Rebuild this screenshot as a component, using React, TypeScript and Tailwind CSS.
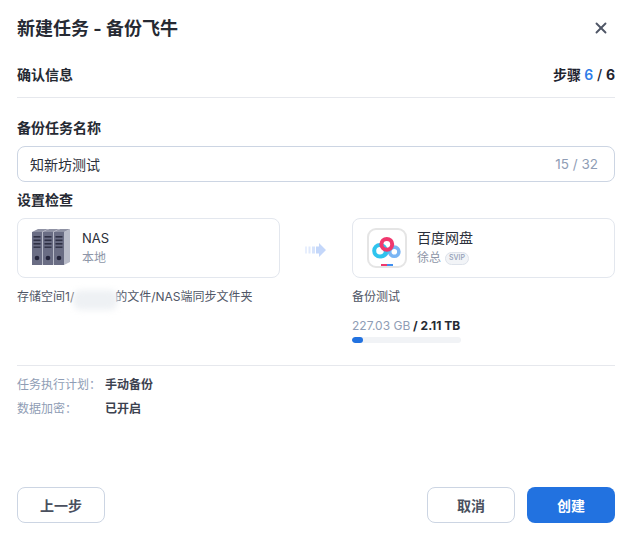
import { X } from 'lucide-react';

const fontStack = "font-['Inter','Noto_Sans_CJK_SC',sans-serif]";

function NasIcon() {
  return (
    <svg width="46" height="38" viewBox="0 0 46 38">
      {[0, 11, 22].map((x) => (
        <g key={x} transform={`translate(${x} 0)`}>
          <path d="M10 3 L16 0 L16 33 L10 36 Z" fill="#b9bcc9" />
          <path d="M0 3 L6 0 L16 0 L10 3 Z" fill="#8f92a4" />
          <rect x="0" y="3" width="10" height="33" fill="#6a6d84" />
          <rect x="1.5" y="7" width="7" height="1.6" fill="#2f3145" />
          <rect x="1.5" y="10.5" width="7" height="1.6" fill="#2f3145" />
          <rect x="1.5" y="14" width="7" height="1.6" fill="#2f3145" />
          <rect x="1.5" y="17.5" width="7" height="1.4" fill="#2f3145" />
          <circle cx="5" cy="29" r="2.3" fill="#23243a" />
        </g>
      ))}
    </svg>
  );
}

function BaiduIcon() {
  return (
    <div className="flex h-10 w-10 shrink-0 items-center justify-center rounded-[9px] border-2 border-[#e5e5e5] bg-white">
      <svg width="36" height="36" viewBox="0 0 36 36">
        <circle cx="25.3" cy="21.7" r="4.6" fill="none" stroke="#7ab5f4" strokeWidth="3.6" />
        <path d="M12 26.5 C18 27.5 19 18 24 17" fill="none" stroke="#4fbdf1" strokeWidth="3.6" />
        <circle cx="11" cy="20.7" r="5.8" fill="none" stroke="#2fc4ee" strokeWidth="4" />
        <circle cx="17.8" cy="14.3" r="5.4" fill="none" stroke="#f0386e" strokeWidth="4" />
        <rect x="12" y="34" width="6" height="2" fill="#f0386e" />
        <rect x="18" y="34" width="6" height="2" fill="#3f8ef0" />
      </svg>
    </div>
  );
}

function FlowArrow() {
  return (
    <svg width="22" height="14" viewBox="0 0 22 14">
      <rect x="0" y="3.5" width="2" height="7" fill="#e8effd" />
      <rect x="3.5" y="3.5" width="2" height="7" fill="#e0e9fc" />
      <rect x="7" y="3.5" width="3" height="7" fill="#d6e3fb" />
      <path d="M11 3.5 H14 V0 L21 7 L14 14 V10.5 H11 Z" fill="#c4d7fa" />
    </svg>
  );
}

export default function App() {
  return (
    <div className={`${fontStack} flex h-[536px] w-[632px] flex-col bg-white px-[17px] text-[#1f2430]`}>
      {/* Title */}
      <div className="flex h-[56px] items-center justify-between">
        <h1 className="text-[18px] font-bold text-[#262a33]">新建任务 - 备份飞牛</h1>
        <X className="mr-[5px] h-[18px] w-[18px] text-[#4f5666]" strokeWidth={2.5} />
      </div>

      {/* Step */}
      <div className="mt-[4px] flex h-[28px] items-center justify-between text-[14px] font-bold">
        <span className="text-[#262a33]">确认信息</span>
        <span className="text-[#1f2430]">
          步骤 <span className="font-semibold text-[#2f7de8]">6</span>
          <span className="font-medium"> / </span>6
        </span>
      </div>
      <div className="mt-[9px] h-px bg-[#e6e8ed]" />

      {/* Name */}
      <div className="mt-[21px] text-[14px] font-bold leading-[18px] text-[#262a33]">备份任务名称</div>
      <div className="mt-[9px] flex h-[36px] items-center justify-between rounded-[8px] border border-[#ccd5e3] pl-[12px] pr-[16px]">
        <span className="text-[14px] text-[#2b2f3a]">知新坊测试</span>
        <span className="text-[13.5px] text-[#8f9db5]">15 / 32</span>
      </div>

      {/* Check */}
      <div className="mt-[9px] text-[14px] font-bold leading-[18px] text-[#262a33]">设置检查</div>
      <div className="mt-[9px] flex items-start">
        <div className="w-[263px]">
          <div className="flex h-[60px] items-center rounded-[8px] border border-[#e3e7ee] pl-[14px]">
            <NasIcon />
            <div className="ml-[4px]">
              <div className="text-[13px] leading-[20px] text-[#2b2f3a]">NAS</div>
              <div className="text-[12px] leading-[20px] text-[#8e96a8]">本地</div>
            </div>
          </div>
          <div className="relative mt-[10px] text-[12px] leading-[18px] text-[#4f5666]">
            存储空间1/<span className="inline-block w-[41px]" />的文件/NAS端同步文件夹
            <div className="absolute left-[56px] top-[2px] h-[20px] w-[45px] rounded-[8px] bg-[#eef1f4] blur-[3px]" />
          </div>
        </div>

        <div className="flex h-[60px] w-[72px] items-center justify-center pt-[4px]">
          <FlowArrow />
        </div>

        <div className="w-[263px]">
          <div className="flex h-[60px] items-center rounded-[8px] border border-[#e3e7ee] pl-[14px]">
            <BaiduIcon />
            <div className="ml-[10px]">
              <div className="text-[14px] leading-[20px] text-[#2b2f3a]">百度网盘</div>
              <div className="flex items-center text-[12px] leading-[20px] text-[#8e96a8]">
                徐总
                <span className="ml-[4px] flex h-[13px] items-center rounded-full border border-[#dde2ea] bg-[#f2f4f7] px-[3px] text-[7px] font-medium text-[#8f9db5]">
                  SVIP
                </span>
              </div>
            </div>
          </div>
          <div className="mt-[10px] text-[12px] leading-[18px] text-[#4f5666]">备份测试</div>
          <div className="mt-[11px] text-[12px] leading-[18px]">
            <span className="text-[#8f9db5]">227.03 GB</span>
            <span className="font-bold text-[#262a33]"> / 2.11 TB</span>
          </div>
          <div className="mt-[2px] h-[6px] w-[109px] overflow-hidden rounded-full bg-[#f1f3f6]">
            <div className="h-full w-[11px] rounded-full bg-[#2272e0]" />
          </div>
        </div>
      </div>

      <div className="mt-[22px] h-px bg-[#e6e8ed]" />

      {/* Summary */}
      <div className="mt-[10px] flex flex-col gap-[6px] text-[12px] leading-[18px]">
        <div className="flex">
          <span className="w-[88px] text-[#8f9db5]">任务执行计划：</span>
          <span className="font-bold text-[#3c4250]">手动备份</span>
        </div>
        <div className="flex">
          <span className="w-[88px] text-[#8f9db5]">数据加密：</span>
          <span className="font-bold text-[#3c4250]">已开启</span>
        </div>
      </div>

      {/* Footer */}
      <div className="mt-auto mb-[13px] flex items-center justify-between text-[14px] font-bold">
        <button className="h-[36px] w-[88px] rounded-[8px] border border-[#ccd5e3] bg-white text-[#4a505e]">上一步</button>
        <div className="flex gap-[12px]">
          <button className="h-[36px] w-[88px] rounded-[8px] border border-[#ccd5e3] bg-white text-[#4a505e]">取消</button>
          <button className="h-[36px] w-[88px] rounded-[8px] bg-[#2272e0] text-white">创建</button>
        </div>
      </div>
    </div>
  );
}
